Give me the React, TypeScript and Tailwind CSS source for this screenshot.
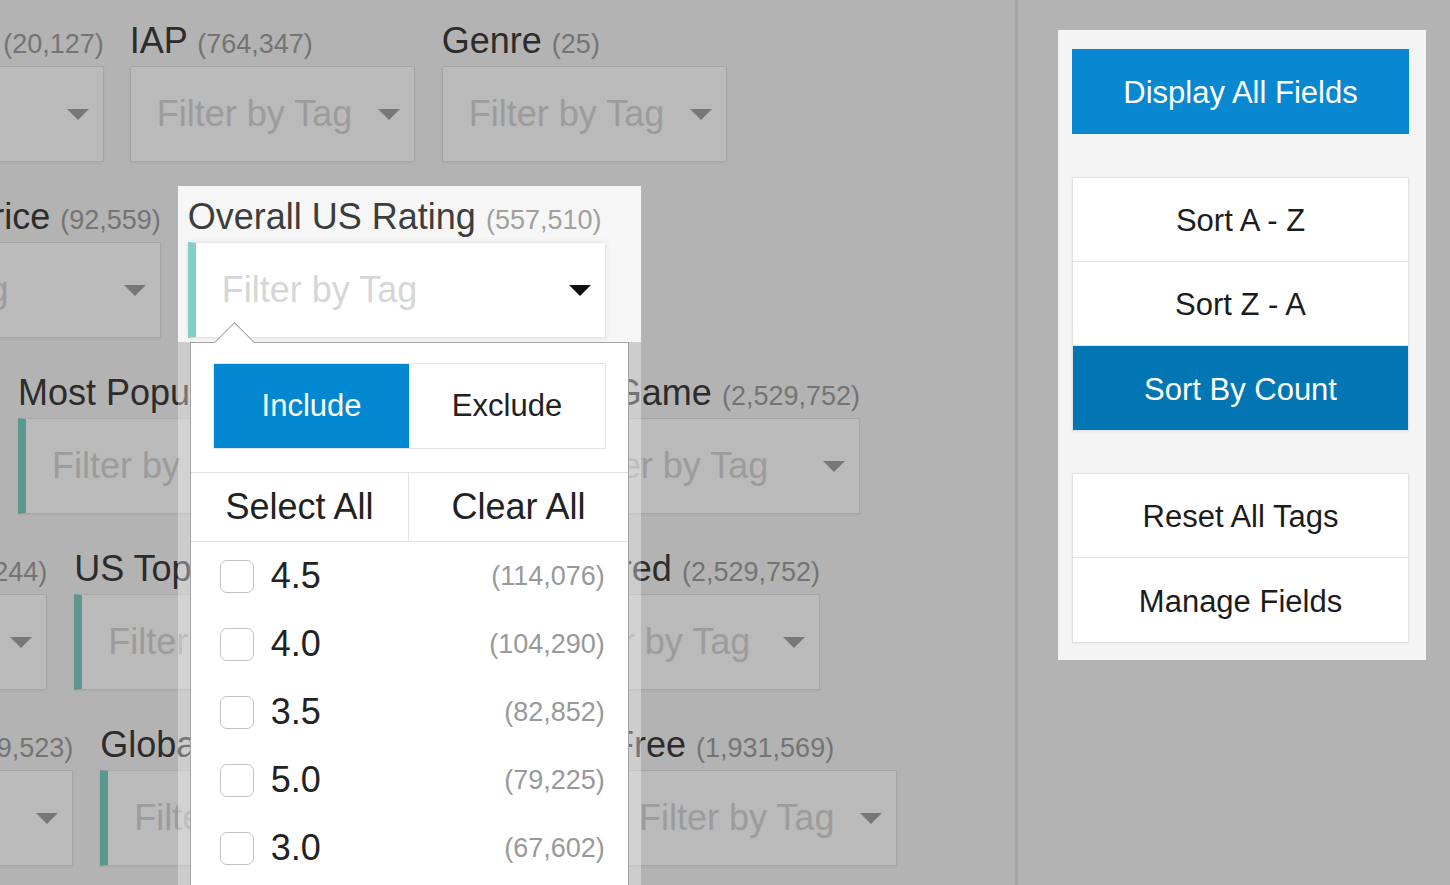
import React from "react";
import clsx from "clsx";

function Caret({ dark }: { dark?: boolean }) {
  return (
    <svg width="22" height="11" viewBox="0 0 22 11" className="mr-[14px] shrink-0">
      <polygon points="0,0 22,0 11,11" fill={dark ? "#111111" : "#a3a3a3"} />
    </svg>
  );
}

type FieldProps = {
  label: string;
  count: string;
  teal?: boolean;
  open?: boolean;
  className?: string;
  children?: React.ReactNode;
};

function Field({ label, count, teal, open, className, children }: FieldProps) {
  return (
    <div className={clsx("relative min-w-[285px] shrink-0", open && "z-10", className)}>
      <div className="relative h-[40px] whitespace-nowrap text-[36px] leading-[40px] text-[#3d3d3d]">
        {label} <span className="text-[27px] text-[#a0a0a0]">{count}</span>
      </div>
      <div
        className={clsx(
          "relative mt-[5px] flex h-[96px] items-center border bg-white",
          teal ? "border-[#e6e6e6] border-l-[8px] border-l-[#7fd1c5]" : "border-[#e3e3e3]",
          open ? "shadow-[0_0_5px_rgba(0,0,0,0.08)]" : "shadow-[0_1px_2px_rgba(0,0,0,0.06)]"
        )}
      >
        <span className="flex-1 overflow-hidden whitespace-nowrap pl-[26px] text-[36px] text-[#d6d6d6]">
          Filter by Tag
        </span>
        <Caret dark={open} />
      </div>
      {children}
    </div>
  );
}

const ratings = [
  { value: "4.5", count: "(114,076)" },
  { value: "4.0", count: "(104,290)" },
  { value: "3.5", count: "(82,852)" },
  { value: "5.0", count: "(79,225)" },
  { value: "3.0", count: "(67,602)" },
];

function TagDropdown() {
  return (
    <div className="absolute left-[-10px] top-[145px] h-[560px] w-[463px] bg-white/35 px-[12px]">
      <div className="relative h-full border border-[#a3a3a3] bg-white">
        <div className="absolute left-[29px] top-[-15px] h-[29px] w-[29px] rotate-45 border-l border-t border-[#a3a3a3] bg-white" />
        <div className="relative px-[22px] pt-[20px]">
          <div className="grid h-[86px] grid-cols-2 border border-[#e6e6e6] text-[31px]">
            <div className="flex items-center justify-center bg-[#0288d1] text-white">Include</div>
            <div className="flex items-center justify-center bg-white text-[#222]">Exclude</div>
          </div>
        </div>
        <div className="mt-[23px] grid h-[70px] grid-cols-2 border-y border-[#e3e3e3] text-[36px] text-[#222]">
          <div className="flex items-center justify-center border-r border-[#e3e3e3]">Select All</div>
          <div className="flex items-center justify-center">Clear All</div>
        </div>
        {ratings.map((r) => (
          <div key={r.value} className="flex h-[68px] items-center pl-[29px] pr-[23px]">
            <div className="h-[33px] w-[34px] rounded-[7px] border-[1.5px] border-[#c3c3c3] bg-white" />
            <span className="ml-[17px] text-[36px] text-[#222]">{r.value}</span>
            <span className="ml-auto text-[27px] text-[#999]">{r.count}</span>
          </div>
        ))}
      </div>
    </div>
  );
}

function PanelButton({ children, active, last }: { children: React.ReactNode; active?: boolean; last?: boolean }) {
  return (
    <div
      className={clsx(
        "flex h-[84px] items-center justify-center pt-[4px] text-[31px]",
        active ? "bg-[#0176b3] text-white" : "bg-white text-[#1c1c1c]",
        !last && "border-b border-[#e6e6e6]"
      )}
    >
      {children}
    </div>
  );
}

export default function App() {
  return (
    <div className="relative flex h-[885px] w-[1450px] overflow-hidden bg-[#f6f6f6] font-['Liberation_Sans',Arial,sans-serif]">
      <div className="flex w-[1018px] shrink-0 flex-col gap-[35px] border-r-[3px] border-[#e4e4e4] pt-[21px]">
        <div className="ml-[-283px] flex gap-[26px]">
          <Field label="App Subcategory" count="(20,127)" />
          <Field label="IAP" count="(764,347)" />
          <Field label="Genre" count="(25)" className="ml-px" />
        </div>
        <div className="ml-[-214px] flex gap-[27px]">
          <Field label="Suggested Price" count="(92,559)" />
          <Field label="Overall US Rating" count="(557,510)" teal open className="w-[418px]">
            <div className="pointer-events-none absolute left-[-10px] top-[-11px] h-[156px] w-[463px] shadow-[0_0_0_3000px_rgba(0,0,0,0.27)]" />
            <TagDropdown />
          </Field>
        </div>
        <div className="ml-[18px] flex w-[842px] justify-between">
          <Field label="Most Popular Genre" count="(1,204,118)" teal />
          <Field label="Top Game" count="(2,529,752)" />
        </div>
        <div className="ml-[-299px] flex w-[1119px] gap-[27px]">
          <Field label="Global Rank" count="(1,432,244)" />
          <Field label="US Top Grossing" count="(843,210)" teal />
          <Field label="Featured" count="(2,529,752)" className="ml-auto" />
        </div>
        <div className="ml-[-283px] flex w-[1180px] gap-[27px]">
          <Field label="Total Ratings" count="(1,239,523)" />
          <Field label="Global Top Paid" count="(612,480)" teal />
          <Field label="Free" count="(1,931,569)" className="ml-auto" />
        </div>
      </div>

      <div className="flex-1 pl-[40px] pt-[30px]">
        <div className="relative z-20 w-[368px] bg-[#f4f4f4] pb-[17px] pl-[14px] pr-[17px] pt-[19px]">
          <div className="flex h-[85px] items-center justify-center bg-[#0788d0] pt-[4px] text-[31px] text-white">
            Display All Fields
          </div>
          <div className="mt-[43px] border border-[#e2e2e2] shadow-[0_1px_2px_rgba(0,0,0,0.05)]">
            <PanelButton>Sort A - Z</PanelButton>
            <PanelButton>Sort Z - A</PanelButton>
            <PanelButton active last>
              Sort By Count
            </PanelButton>
          </div>
          <div className="mt-[42px] border border-[#e2e2e2] shadow-[0_1px_2px_rgba(0,0,0,0.05)]">
            <PanelButton>Reset All Tags</PanelButton>
            <PanelButton last>Manage Fields</PanelButton>
          </div>
        </div>
      </div>
    </div>
  );
}
